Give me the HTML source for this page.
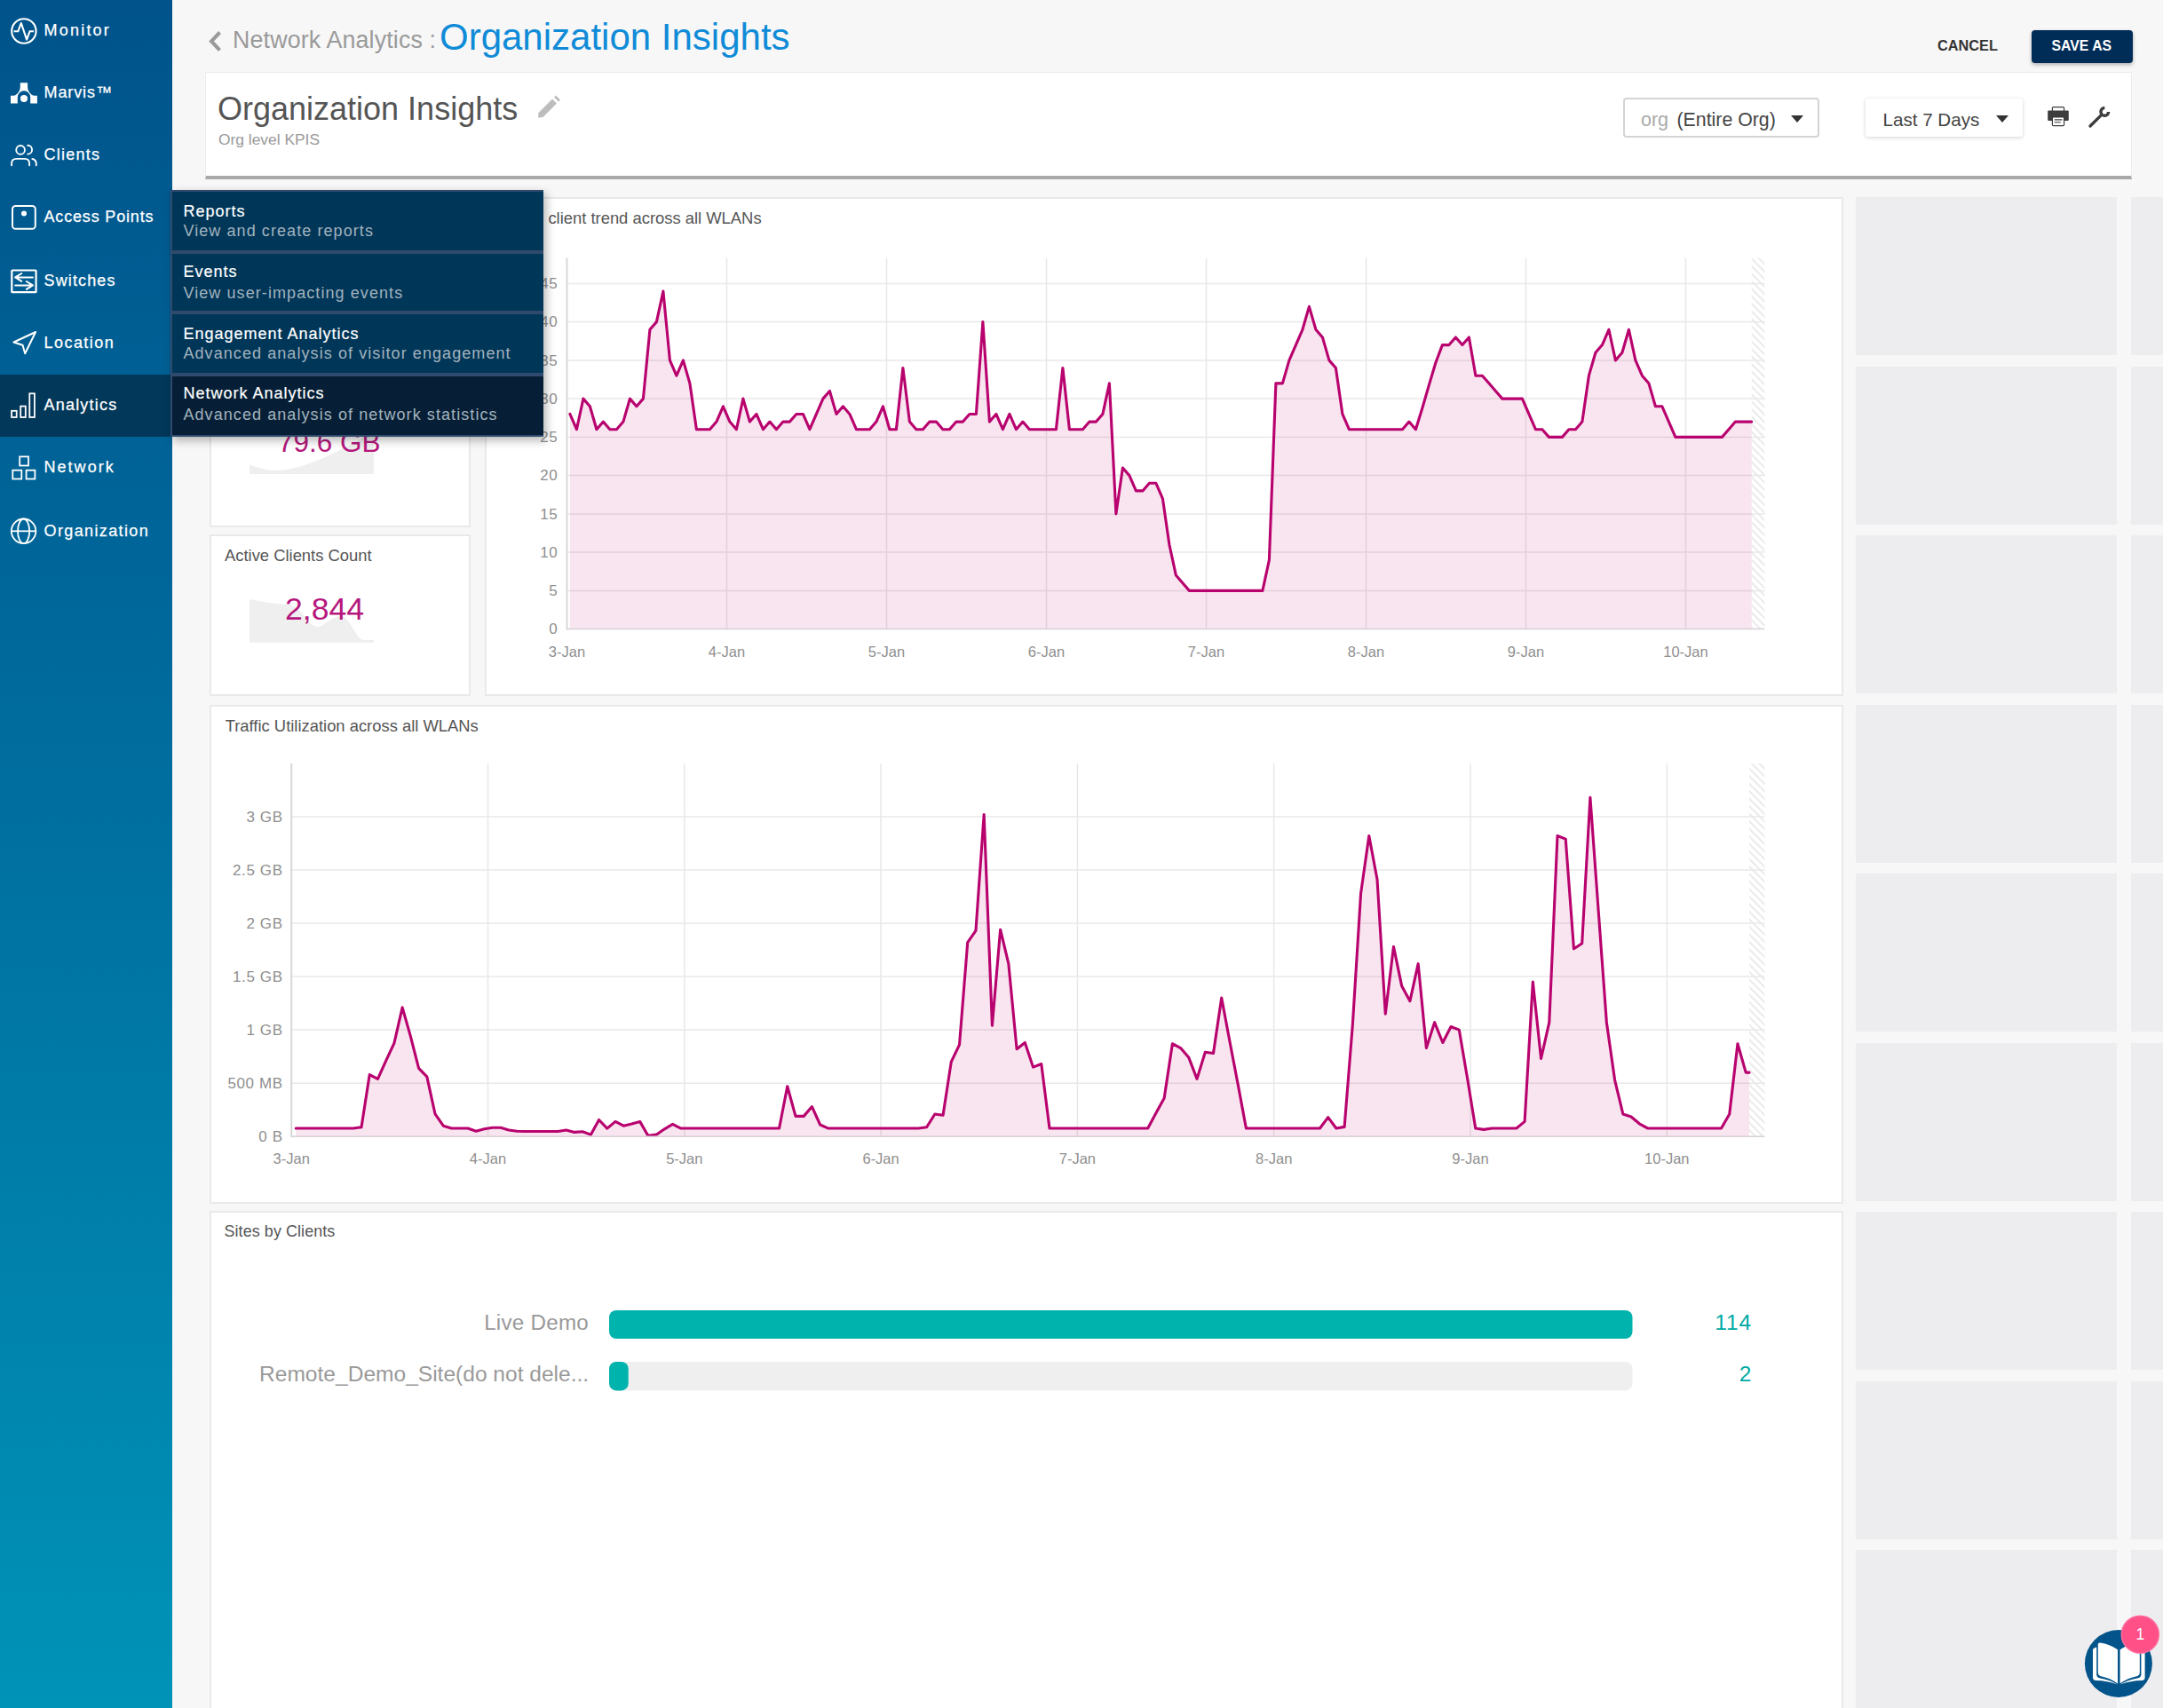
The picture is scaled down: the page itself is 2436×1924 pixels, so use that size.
<!DOCTYPE html>
<html><head><meta charset="utf-8"><title>Organization Insights</title>
<style>
html,body{margin:0;padding:0}
body{width:2436px;height:1924px;overflow:hidden;position:relative;background:#f7f7f7;font-family:"Liberation Sans", sans-serif;}
.abs{position:absolute}
#side{position:absolute;left:0;top:0;width:194px;height:1924px;background:linear-gradient(to bottom,#00538b 0%,#006a9c 40%,#0093b8 100%)}
.nav{position:absolute;left:49.5px;height:40px;line-height:40px;color:#fff;font-size:18px;letter-spacing:0.55px;white-space:nowrap;-webkit-text-stroke:0.25px #fff}
.card{position:absolute;background:#fff;border:2px solid #e8e9eb;box-sizing:border-box}
.blk{position:absolute;background:#ededef}
.ttl{position:absolute;font-size:18.4px;color:#555;white-space:nowrap;line-height:20px}
.menu{position:absolute;left:192px;top:214px;width:420px;height:278px;background:#2f4a6c;box-shadow:3px 4px 10px rgba(0,0,0,0.3)}
.mi{position:absolute;left:2px;width:418px;background:#003658}
.mi .t{position:absolute;left:12.5px;font-size:18px;color:#fff;letter-spacing:1.0px;-webkit-text-stroke:0.2px #fff;white-space:nowrap;line-height:20px}
.mi .s{position:absolute;left:12.4px;font-size:18px;color:#a3b3be;letter-spacing:1.08px;white-space:nowrap;line-height:20px}
</style></head><body>
<div id="side"></div>
<div class="abs" style="left:0;top:422px;width:193px;height:70px;background:#02385a"></div>
<svg class="abs" style="left:0;top:0" width="194" height="700" viewBox="0 0 194 700">
<circle cx="26.9" cy="35" r="13.7" stroke="#fff" fill="none" stroke-width="2.1"/>
<polyline points="15.6,35.3 20.3,35.3 23.8,26 30.1,44.6 33.5,35.3 38,35.3" stroke="#fff" fill="none" stroke-width="2.1" stroke-linejoin="round"/>
<path d="M22.8,93.3 H31.1 V98 C31.1,103 35.5,107.8 38.7,107.8 H41.9 V116.4 H34.2 V109.5 A7.2,7.2 0 0 0 19.8,109.5 V116.4 H12 V107.8 H15.2 C18.4,107.8 22.8,103 22.8,98 Z" fill="#fff"/>
<circle cx="27" cy="111" r="4" fill="#fff"/>
<circle cx="23.1" cy="168.9" r="4.85" stroke="#fff" fill="none" stroke-width="1.9"/>
<path d="M31.2,163.8 A4.7,4.7 0 0 1 31.2,173.6" stroke="#fff" fill="none" stroke-width="1.9" stroke-linecap="round"/>
<path d="M13.1,186.3 V184.2 C13.1,180.8 15.4,178.9 18.6,178.9 H27.6 C30.8,178.9 33.1,180.8 33.1,184.2 V186.3" stroke="#fff" fill="none" stroke-width="1.9" stroke-linecap="round"/>
<path d="M36.3,179 C39,179.6 40.8,181.8 40.8,184.6 V186.3" stroke="#fff" fill="none" stroke-width="1.9" stroke-linecap="round"/>
<rect x="14" y="232" width="25.8" height="25.8" rx="3.6" stroke="#fff" fill="none" stroke-width="2"/>
<circle cx="27" cy="240.5" r="3" fill="#fff"/>
<rect x="13.3" y="304.5" width="27.3" height="24.7" rx="0.8" stroke="#fff" fill="none" stroke-width="2.2"/>
<path d="M36.9,312.4 H17.2 M24.3,308 L17.2,312.4 L24.3,316.8" stroke="#fff" fill="none" stroke-width="2" stroke-linecap="round" stroke-linejoin="round"/>
<path d="M17.2,321.4 H36.9 M29.8,317 L36.9,321.4 L29.8,325.8" stroke="#fff" fill="none" stroke-width="2" stroke-linecap="round" stroke-linejoin="round"/>
<path d="M40.1,374 L15.4,385.5 L25.5,388.8 L28.2,398.2 Z" stroke="#fff" fill="none" stroke-width="2" stroke-linejoin="round"/>
<rect x="13.1" y="462.8" width="5.6" height="7.2" stroke="#fff" fill="none" stroke-width="1.8"/>
<rect x="23.2" y="457.6" width="5.6" height="12.4" stroke="#fff" fill="none" stroke-width="1.8"/>
<rect x="33.3" y="443.3" width="5.6" height="26.7" stroke="#fff" fill="none" stroke-width="1.8"/>
<rect x="22.2" y="514.4" width="9.8" height="10.1" stroke="#fff" fill="none" stroke-width="1.8"/>
<rect x="14.3" y="529.7" width="10" height="9.8" stroke="#fff" fill="none" stroke-width="1.8"/>
<rect x="29.6" y="529.7" width="9.8" height="9.8" stroke="#fff" fill="none" stroke-width="1.8"/>
<circle cx="26.6" cy="598.3" r="13.8" stroke="#fff" fill="none" stroke-width="1.8"/>
<ellipse cx="26.6" cy="598.3" rx="6.6" ry="13.8" stroke="#fff" fill="none" stroke-width="1.8"/>
<line x1="12.8" y1="598.3" x2="40.4" y2="598.3" stroke="#fff" stroke-width="1.8"/>
</svg>
<div class="nav" style="top:14px;letter-spacing:2.22px">Monitor</div><div class="nav" style="top:84px;letter-spacing:0.9px">Marvis™</div><div class="nav" style="top:154px;letter-spacing:1.23px">Clients</div><div class="nav" style="top:224px;letter-spacing:0.83px">Access Points</div><div class="nav" style="top:296px;letter-spacing:1.14px">Switches</div><div class="nav" style="top:366px;letter-spacing:1.46px">Location</div><div class="nav" style="top:436px;letter-spacing:1.2px">Analytics</div><div class="nav" style="top:506px;letter-spacing:2.03px">Network</div><div class="nav" style="top:578px;letter-spacing:1.38px">Organization</div>

<!-- header -->
<svg class="abs" style="left:230px;top:30px" width="30" height="32"><polyline points="17.5,6.5 8,16.5 17.5,26.5" fill="none" stroke="#9a9a9a" stroke-width="4"/></svg>
<div class="abs" style="left:262px;top:24.6px;font-size:26.8px;letter-spacing:0.15px;color:#9a9a9a;white-space:nowrap;line-height:40px">Network Analytics :</div>
<div class="abs" style="left:495px;top:14px;font-size:42px;color:#0f8bd8;white-space:nowrap;line-height:56px">Organization Insights</div>
<div class="abs" style="left:2182px;top:37.8px;font-size:16.3px;font-weight:bold;color:#333;white-space:nowrap;line-height:26px">CANCEL</div>
<div class="abs" style="left:2288px;top:34px;width:114px;height:37px;background:#002d58;border-radius:4px;box-shadow:0 2px 4px rgba(0,0,0,0.3)"></div>
<div class="abs" style="left:2310.5px;top:39px;font-size:15.8px;font-weight:bold;color:#fff;white-space:nowrap;line-height:26px">SAVE AS</div>

<div class="abs" style="left:231px;top:81px;width:2170px;height:121px;background:#fff;border:1px solid #ececec;border-bottom:4px solid #a9a9a9;box-sizing:border-box"></div>
<div class="abs" style="left:245px;top:100.5px;font-size:36px;color:#555;white-space:nowrap;line-height:44px">Organization Insights</div>
<svg class="abs" style="left:603px;top:106px" width="30" height="30" viewBox="0 0 30 30"><path d="M3,26.5 L3.5,21 L19,5.5 L24,10.5 L8.5,26 Z M21,3.5 L23,1.5 L28,6.5 L26,8.5 Z" fill="#bdbdbd"/></svg>
<div class="abs" style="left:246px;top:146px;font-size:17.4px;color:#9a9a9a;white-space:nowrap;line-height:22px">Org level KPIS</div>

<div class="abs" style="left:1828px;top:110px;width:221px;height:45px;border:2px solid #d4d4d4;border-radius:4px;box-sizing:border-box;background:#fff"></div>
<div class="abs" style="left:1848px;top:122px;font-size:21.5px;color:#aaa;white-space:nowrap;line-height:26px">org</div>
<div class="abs" style="left:1888.5px;top:122px;font-size:21.3px;color:#444;white-space:nowrap;line-height:26px">(Entire Org)</div>
<svg class="abs" style="left:2016px;top:129px" width="16" height="10"><polygon points="1,1 15,1 8,9" fill="#333"/></svg>
<div class="abs" style="left:2101px;top:111px;width:177px;height:43px;background:#fff;border-radius:3px;box-shadow:0 1px 4px rgba(0,0,0,0.18)"></div>
<div class="abs" style="left:2120.5px;top:121.5px;font-size:20.6px;color:#444;white-space:nowrap;line-height:26px">Last 7 Days</div>
<svg class="abs" style="left:2247px;top:129px" width="16" height="10"><polygon points="1,1 15,1 8,9" fill="#333"/></svg>
<svg class="abs" style="left:0;top:0" width="2436" height="160" viewBox="0 0 2436 160">
<rect x="2311.4" y="120.6" width="13.2" height="8" rx="1.2" fill="#fff" stroke="#3d3d3d" stroke-width="1.2"/>
<rect x="2306.2" y="124.4" width="23.6" height="11.6" rx="1.2" fill="#3d3d3d"/>
<rect x="2311.4" y="132" width="13.2" height="9.6" rx="1.2" fill="#fff" stroke="#3d3d3d" stroke-width="1.2"/>
<path d="M2313.6,134.9 H2322.6 M2313.6,137.7 H2320.8" stroke="#3d3d3d" stroke-width="1.1"/>
<line x1="2354" y1="142" x2="2366.5" y2="129.6" stroke="#3d3d3d" stroke-width="3.3" stroke-linecap="round"/>
<path d="M2374.6,125.9 A4.3,4.3 0 1 1 2370.3,121.6" fill="none" stroke="#3d3d3d" stroke-width="3.5"/>
</svg>

<!-- cards -->
<div class="card" style="left:236px;top:222px;width:294px;height:372px"></div>
<svg class="abs" style="left:0;top:0" width="540" height="800" viewBox="0 0 540 800">
<path d="M281,523.6 C292,527 300,530 310,530 C340,530 380,510 421,486 V534 H281 Z" fill="#efefef"/>
<path d="M281,675 C300,679 312,680 325,681 C340,683 348,706 357,706 C366,706 372,694 385,694 C395,696 400,720 410,721 H421 V723.7 H281 Z" fill="#efefef"/>
</svg>
<div class="abs" style="left:313px;top:475.5px;font-size:31.5px;color:#b5177d;white-space:nowrap;line-height:44px">79.6 GB</div>
<div class="card" style="left:236px;top:602px;width:294px;height:182px"></div>
<svg class="abs" style="left:0;top:0" width="540" height="800" viewBox="0 0 540 800">
<path d="M281,675 C300,679 312,680 325,681 C340,683 348,706 357,706 C366,706 372,694 385,694 C395,696 400,720 410,721 H421 V723.7 H281 Z" fill="#efefef"/>
</svg>
<div class="ttl" style="left:253px;top:616px">Active Clients Count</div>
<div class="abs" style="left:321px;top:664px;font-size:35.6px;color:#b5177d;white-space:nowrap;line-height:44px">2,844</div>

<div class="card" style="left:546px;top:222px;width:1530px;height:562px"></div>
<div class="ttl" style="left:617.4px;top:236px">client trend across all WLANs</div>

<div class="card" style="left:236px;top:794px;width:1840px;height:562px"></div>
<div class="ttl" style="left:253.7px;top:808px">Traffic Utilization across all WLANs</div>

<div class="card" style="left:236px;top:1364px;width:1840px;height:600px"></div>
<div class="ttl" style="left:252.5px;top:1377px;font-size:17.9px;letter-spacing:0.1px">Sites by Clients</div>

<svg class="abs" style="left:0;top:0" width="2436" height="1924" viewBox="0 0 2436 1924" font-family='"Liberation Sans", sans-serif'>
<defs><pattern id="hatch" patternUnits="userSpaceOnUse" width="6" height="6" patternTransform="rotate(-45)"><rect width="6" height="6" fill="#fff"/><rect width="1.6" height="6" fill="#e6e6e6"/></pattern></defs>
<rect x="1972.7" y="290.5" width="14.700000000000045" height="418.1" fill="url(#hatch)"/>
<line x1="818.5" y1="290.5" x2="818.5" y2="708.6" stroke="#e8e8e8" stroke-width="1.5"/>
<line x1="998.5" y1="290.5" x2="998.5" y2="708.6" stroke="#e8e8e8" stroke-width="1.5"/>
<line x1="1178.5" y1="290.5" x2="1178.5" y2="708.6" stroke="#e8e8e8" stroke-width="1.5"/>
<line x1="1358.5" y1="290.5" x2="1358.5" y2="708.6" stroke="#e8e8e8" stroke-width="1.5"/>
<line x1="1538.5" y1="290.5" x2="1538.5" y2="708.6" stroke="#e8e8e8" stroke-width="1.5"/>
<line x1="1718.5" y1="290.5" x2="1718.5" y2="708.6" stroke="#e8e8e8" stroke-width="1.5"/>
<line x1="1898.5" y1="290.5" x2="1898.5" y2="708.6" stroke="#e8e8e8" stroke-width="1.5"/>
<line x1="638.5" y1="665.4" x2="1987.4" y2="665.4" stroke="#e8e8e8" stroke-width="1.5"/>
<line x1="638.5" y1="622.1" x2="1987.4" y2="622.1" stroke="#e8e8e8" stroke-width="1.5"/>
<line x1="638.5" y1="578.9" x2="1987.4" y2="578.9" stroke="#e8e8e8" stroke-width="1.5"/>
<line x1="638.5" y1="535.6" x2="1987.4" y2="535.6" stroke="#e8e8e8" stroke-width="1.5"/>
<line x1="638.5" y1="492.4" x2="1987.4" y2="492.4" stroke="#e8e8e8" stroke-width="1.5"/>
<line x1="638.5" y1="449.1" x2="1987.4" y2="449.1" stroke="#e8e8e8" stroke-width="1.5"/>
<line x1="638.5" y1="405.9" x2="1987.4" y2="405.9" stroke="#e8e8e8" stroke-width="1.5"/>
<line x1="638.5" y1="362.6" x2="1987.4" y2="362.6" stroke="#e8e8e8" stroke-width="1.5"/>
<line x1="638.5" y1="319.4" x2="1987.4" y2="319.4" stroke="#e8e8e8" stroke-width="1.5"/>
<path d="M641.90,466.43 L649.40,483.73 L656.90,449.13 L664.40,457.78 L671.90,483.73 L679.40,475.08 L686.90,483.73 L694.40,483.73 L701.90,475.08 L709.40,449.13 L716.90,457.78 L724.40,449.13 L731.90,371.29 L739.40,362.64 L746.90,328.04 L754.40,405.89 L761.90,423.18 L769.40,405.89 L776.90,431.83 L784.40,483.73 L791.90,483.73 L799.40,483.73 L806.90,475.08 L814.40,457.78 L821.90,475.08 L829.40,483.73 L836.90,449.13 L844.40,475.08 L851.90,466.43 L859.40,483.73 L866.90,475.08 L874.40,483.73 L881.90,475.08 L889.40,475.08 L896.90,466.43 L904.40,466.43 L911.90,483.73 L919.40,466.43 L926.90,449.13 L934.40,440.48 L941.90,466.43 L949.40,457.78 L956.90,466.43 L964.40,483.73 L971.90,483.73 L979.40,483.73 L986.90,475.08 L994.40,457.78 L1001.90,483.73 L1009.40,483.73 L1016.90,414.53 L1024.40,475.08 L1031.90,483.73 L1039.40,483.73 L1046.90,475.08 L1054.40,475.08 L1061.90,483.73 L1069.40,483.73 L1076.90,475.08 L1084.40,475.08 L1091.90,466.43 L1099.40,466.43 L1106.90,362.64 L1114.40,475.08 L1121.90,466.43 L1129.40,483.73 L1136.90,466.43 L1144.40,483.73 L1151.90,475.08 L1159.40,483.73 L1166.90,483.73 L1174.40,483.73 L1181.90,483.73 L1189.40,483.73 L1196.90,414.53 L1204.40,483.73 L1211.90,483.73 L1219.40,483.73 L1226.90,475.08 L1234.40,475.08 L1241.90,466.43 L1249.40,431.83 L1256.90,578.87 L1264.40,526.97 L1271.90,535.62 L1279.40,552.92 L1286.90,552.92 L1294.40,544.27 L1301.90,544.27 L1309.40,561.57 L1316.90,613.46 L1324.40,648.06 L1331.90,656.71 L1339.40,665.36 L1346.90,665.36 L1354.40,665.36 L1361.90,665.36 L1369.40,665.36 L1376.90,665.36 L1384.40,665.36 L1391.90,665.36 L1399.40,665.36 L1406.90,665.36 L1414.40,665.36 L1421.90,665.36 L1429.40,630.76 L1436.90,431.83 L1444.40,431.83 L1451.90,405.89 L1459.40,388.59 L1466.90,371.29 L1474.40,345.34 L1481.90,371.29 L1489.40,379.94 L1496.90,405.89 L1504.40,414.53 L1511.90,466.43 L1519.40,483.73 L1526.90,483.73 L1534.40,483.73 L1541.90,483.73 L1549.40,483.73 L1556.90,483.73 L1564.40,483.73 L1571.90,483.73 L1579.40,483.73 L1586.90,475.08 L1594.40,483.73 L1601.90,459.51 L1609.40,433.56 L1616.90,408.48 L1624.40,388.59 L1631.90,388.59 L1639.40,379.94 L1646.90,388.59 L1654.40,379.94 L1661.90,423.18 L1669.40,423.18 L1676.90,431.83 L1684.40,440.48 L1691.90,449.13 L1699.40,449.13 L1706.90,449.13 L1714.40,449.13 L1721.90,466.43 L1729.40,483.73 L1736.90,483.73 L1744.40,492.38 L1751.90,492.38 L1759.40,492.38 L1766.90,483.73 L1774.40,483.73 L1781.90,475.08 L1789.40,423.18 L1796.90,397.24 L1804.40,388.59 L1811.90,371.29 L1819.40,405.89 L1826.90,397.24 L1834.40,371.29 L1841.90,405.89 L1849.40,423.18 L1856.90,431.83 L1864.40,457.78 L1871.90,457.78 L1879.40,475.08 L1886.90,492.38 L1894.40,492.38 L1901.90,492.38 L1909.40,492.38 L1916.90,492.38 L1924.40,492.38 L1931.90,492.38 L1939.40,492.38 L1946.90,483.73 L1954.40,475.08 L1961.90,475.08 L1969.40,475.08 L1972.70,475.08 L1972.7,708.6 L641.9,708.6 Z" fill="#b8026e" fill-opacity="0.1"/>
<path d="M641.90,466.43 L649.40,483.73 L656.90,449.13 L664.40,457.78 L671.90,483.73 L679.40,475.08 L686.90,483.73 L694.40,483.73 L701.90,475.08 L709.40,449.13 L716.90,457.78 L724.40,449.13 L731.90,371.29 L739.40,362.64 L746.90,328.04 L754.40,405.89 L761.90,423.18 L769.40,405.89 L776.90,431.83 L784.40,483.73 L791.90,483.73 L799.40,483.73 L806.90,475.08 L814.40,457.78 L821.90,475.08 L829.40,483.73 L836.90,449.13 L844.40,475.08 L851.90,466.43 L859.40,483.73 L866.90,475.08 L874.40,483.73 L881.90,475.08 L889.40,475.08 L896.90,466.43 L904.40,466.43 L911.90,483.73 L919.40,466.43 L926.90,449.13 L934.40,440.48 L941.90,466.43 L949.40,457.78 L956.90,466.43 L964.40,483.73 L971.90,483.73 L979.40,483.73 L986.90,475.08 L994.40,457.78 L1001.90,483.73 L1009.40,483.73 L1016.90,414.53 L1024.40,475.08 L1031.90,483.73 L1039.40,483.73 L1046.90,475.08 L1054.40,475.08 L1061.90,483.73 L1069.40,483.73 L1076.90,475.08 L1084.40,475.08 L1091.90,466.43 L1099.40,466.43 L1106.90,362.64 L1114.40,475.08 L1121.90,466.43 L1129.40,483.73 L1136.90,466.43 L1144.40,483.73 L1151.90,475.08 L1159.40,483.73 L1166.90,483.73 L1174.40,483.73 L1181.90,483.73 L1189.40,483.73 L1196.90,414.53 L1204.40,483.73 L1211.90,483.73 L1219.40,483.73 L1226.90,475.08 L1234.40,475.08 L1241.90,466.43 L1249.40,431.83 L1256.90,578.87 L1264.40,526.97 L1271.90,535.62 L1279.40,552.92 L1286.90,552.92 L1294.40,544.27 L1301.90,544.27 L1309.40,561.57 L1316.90,613.46 L1324.40,648.06 L1331.90,656.71 L1339.40,665.36 L1346.90,665.36 L1354.40,665.36 L1361.90,665.36 L1369.40,665.36 L1376.90,665.36 L1384.40,665.36 L1391.90,665.36 L1399.40,665.36 L1406.90,665.36 L1414.40,665.36 L1421.90,665.36 L1429.40,630.76 L1436.90,431.83 L1444.40,431.83 L1451.90,405.89 L1459.40,388.59 L1466.90,371.29 L1474.40,345.34 L1481.90,371.29 L1489.40,379.94 L1496.90,405.89 L1504.40,414.53 L1511.90,466.43 L1519.40,483.73 L1526.90,483.73 L1534.40,483.73 L1541.90,483.73 L1549.40,483.73 L1556.90,483.73 L1564.40,483.73 L1571.90,483.73 L1579.40,483.73 L1586.90,475.08 L1594.40,483.73 L1601.90,459.51 L1609.40,433.56 L1616.90,408.48 L1624.40,388.59 L1631.90,388.59 L1639.40,379.94 L1646.90,388.59 L1654.40,379.94 L1661.90,423.18 L1669.40,423.18 L1676.90,431.83 L1684.40,440.48 L1691.90,449.13 L1699.40,449.13 L1706.90,449.13 L1714.40,449.13 L1721.90,466.43 L1729.40,483.73 L1736.90,483.73 L1744.40,492.38 L1751.90,492.38 L1759.40,492.38 L1766.90,483.73 L1774.40,483.73 L1781.90,475.08 L1789.40,423.18 L1796.90,397.24 L1804.40,388.59 L1811.90,371.29 L1819.40,405.89 L1826.90,397.24 L1834.40,371.29 L1841.90,405.89 L1849.40,423.18 L1856.90,431.83 L1864.40,457.78 L1871.90,457.78 L1879.40,475.08 L1886.90,492.38 L1894.40,492.38 L1901.90,492.38 L1909.40,492.38 L1916.90,492.38 L1924.40,492.38 L1931.90,492.38 L1939.40,492.38 L1946.90,483.73 L1954.40,475.08 L1961.90,475.08 L1969.40,475.08 L1972.70,475.08" fill="none" stroke="#b8026e" stroke-width="3.1" stroke-linejoin="round" stroke-linecap="round"/>
<line x1="638.5" y1="290.5" x2="638.5" y2="709.6" stroke="#d8d8d8" stroke-width="2"/>
<line x1="638.5" y1="708.6" x2="1987.4" y2="708.6" stroke="#d8d0d8" stroke-width="1.5"/>
<text x="628.3" y="714.4" text-anchor="end" font-size="17" letter-spacing="0.6" fill="#8f8f8f">0</text>
<text x="628.3" y="671.2" text-anchor="end" font-size="17" letter-spacing="0.6" fill="#8f8f8f">5</text>
<text x="628.3" y="627.9" text-anchor="end" font-size="17" letter-spacing="0.6" fill="#8f8f8f">10</text>
<text x="628.3" y="584.7" text-anchor="end" font-size="17" letter-spacing="0.6" fill="#8f8f8f">15</text>
<text x="628.3" y="541.4" text-anchor="end" font-size="17" letter-spacing="0.6" fill="#8f8f8f">20</text>
<text x="628.3" y="498.2" text-anchor="end" font-size="17" letter-spacing="0.6" fill="#8f8f8f">25</text>
<text x="628.3" y="454.9" text-anchor="end" font-size="17" letter-spacing="0.6" fill="#8f8f8f">30</text>
<text x="628.3" y="411.7" text-anchor="end" font-size="17" letter-spacing="0.6" fill="#8f8f8f">35</text>
<text x="628.3" y="368.4" text-anchor="end" font-size="17" letter-spacing="0.6" fill="#8f8f8f">40</text>
<text x="628.3" y="325.2" text-anchor="end" font-size="17" letter-spacing="0.6" fill="#8f8f8f">45</text>
<text x="638.5" y="740" text-anchor="middle" font-size="16.5" fill="#8f8f8f">3-Jan</text>
<text x="818.5" y="740" text-anchor="middle" font-size="16.5" fill="#8f8f8f">4-Jan</text>
<text x="998.5" y="740" text-anchor="middle" font-size="16.5" fill="#8f8f8f">5-Jan</text>
<text x="1178.5" y="740" text-anchor="middle" font-size="16.5" fill="#8f8f8f">6-Jan</text>
<text x="1358.5" y="740" text-anchor="middle" font-size="16.5" fill="#8f8f8f">7-Jan</text>
<text x="1538.5" y="740" text-anchor="middle" font-size="16.5" fill="#8f8f8f">8-Jan</text>
<text x="1718.5" y="740" text-anchor="middle" font-size="16.5" fill="#8f8f8f">9-Jan</text>
<text x="1898.5" y="740" text-anchor="middle" font-size="16.5" fill="#8f8f8f">10-Jan</text>
<rect x="1970" y="860" width="17.5" height="420.20000000000005" fill="url(#hatch)"/>
<line x1="549.5" y1="860" x2="549.5" y2="1280.2" stroke="#e8e8e8" stroke-width="1.5"/>
<line x1="770.8" y1="860" x2="770.8" y2="1280.2" stroke="#e8e8e8" stroke-width="1.5"/>
<line x1="992.1000000000001" y1="860" x2="992.1000000000001" y2="1280.2" stroke="#e8e8e8" stroke-width="1.5"/>
<line x1="1213.4" y1="860" x2="1213.4" y2="1280.2" stroke="#e8e8e8" stroke-width="1.5"/>
<line x1="1434.7" y1="860" x2="1434.7" y2="1280.2" stroke="#e8e8e8" stroke-width="1.5"/>
<line x1="1656.0000000000002" y1="860" x2="1656.0000000000002" y2="1280.2" stroke="#e8e8e8" stroke-width="1.5"/>
<line x1="1877.3000000000002" y1="860" x2="1877.3000000000002" y2="1280.2" stroke="#e8e8e8" stroke-width="1.5"/>
<line x1="328.2" y1="1220.2" x2="1987.5" y2="1220.2" stroke="#e8e8e8" stroke-width="1.5"/>
<line x1="328.2" y1="1160.1" x2="1987.5" y2="1160.1" stroke="#e8e8e8" stroke-width="1.5"/>
<line x1="328.2" y1="1100.1" x2="1987.5" y2="1100.1" stroke="#e8e8e8" stroke-width="1.5"/>
<line x1="328.2" y1="1040.0" x2="1987.5" y2="1040.0" stroke="#e8e8e8" stroke-width="1.5"/>
<line x1="328.2" y1="980.0" x2="1987.5" y2="980.0" stroke="#e8e8e8" stroke-width="1.5"/>
<line x1="328.2" y1="919.9" x2="1987.5" y2="919.9" stroke="#e8e8e8" stroke-width="1.5"/>
<path d="M333.20,1271.07 L342.43,1271.07 L351.65,1271.07 L360.88,1271.07 L370.10,1271.07 L379.33,1271.07 L388.56,1271.07 L397.78,1271.07 L407.01,1269.75 L416.23,1210.54 L425.46,1215.35 L434.69,1194.93 L443.91,1175.11 L453.14,1134.88 L462.36,1167.31 L471.59,1203.34 L480.82,1212.94 L490.04,1254.98 L499.27,1268.19 L508.49,1271.07 L517.72,1271.07 L526.95,1271.07 L536.17,1274.19 L545.40,1271.79 L554.62,1270.23 L563.85,1270.23 L573.08,1272.99 L582.30,1274.19 L591.53,1274.44 L600.75,1274.44 L609.98,1274.44 L619.21,1274.44 L628.43,1274.44 L637.66,1272.99 L646.88,1275.40 L656.11,1274.80 L665.34,1278.16 L674.56,1261.46 L683.79,1271.07 L693.01,1263.39 L702.24,1268.19 L711.47,1266.03 L720.69,1263.39 L729.92,1279.36 L739.14,1278.16 L748.37,1271.79 L757.60,1266.39 L766.82,1271.07 L776.05,1271.07 L785.27,1271.07 L794.50,1271.07 L803.73,1271.07 L812.95,1271.07 L822.18,1271.07 L831.40,1271.07 L840.63,1271.07 L849.86,1271.07 L859.08,1271.07 L868.31,1271.07 L877.53,1271.07 L886.76,1223.75 L895.99,1257.38 L905.21,1257.38 L914.44,1246.57 L923.66,1266.99 L932.89,1271.07 L942.12,1271.07 L951.34,1271.07 L960.57,1271.07 L969.79,1271.07 L979.02,1271.07 L988.25,1271.07 L997.47,1271.07 L1006.70,1271.07 L1015.92,1271.07 L1025.15,1271.07 L1034.38,1271.07 L1043.60,1269.75 L1052.83,1254.98 L1062.05,1256.18 L1071.28,1196.13 L1080.51,1176.91 L1089.73,1061.62 L1098.96,1048.41 L1108.18,917.50 L1117.41,1155.30 L1126.64,1047.21 L1135.86,1085.64 L1145.09,1181.72 L1154.31,1174.51 L1163.54,1202.13 L1172.77,1198.53 L1181.99,1270.95 L1191.22,1270.95 L1200.44,1270.95 L1209.67,1270.95 L1218.90,1270.95 L1228.12,1270.95 L1237.35,1270.95 L1246.57,1270.95 L1255.80,1270.95 L1265.03,1270.95 L1274.25,1270.95 L1283.48,1270.95 L1292.70,1270.95 L1301.93,1253.78 L1311.16,1236.96 L1320.38,1175.71 L1329.61,1180.52 L1338.83,1191.33 L1348.06,1215.35 L1357.29,1185.32 L1366.51,1186.52 L1375.74,1124.07 L1384.96,1173.31 L1394.19,1221.35 L1403.42,1270.95 L1412.64,1270.95 L1421.87,1270.95 L1431.09,1270.95 L1440.32,1270.95 L1449.55,1270.95 L1458.77,1270.95 L1468.00,1270.95 L1477.22,1270.95 L1486.45,1270.95 L1495.68,1258.58 L1504.90,1270.95 L1514.13,1269.39 L1523.35,1154.10 L1532.58,1006.37 L1541.81,941.52 L1551.03,990.76 L1560.26,1142.09 L1569.48,1066.42 L1578.71,1110.86 L1587.94,1127.67 L1597.16,1085.64 L1606.39,1180.52 L1615.61,1151.69 L1624.84,1174.51 L1634.07,1156.50 L1643.29,1160.10 L1652.52,1214.14 L1661.74,1270.95 L1670.97,1272.39 L1680.20,1270.95 L1689.42,1270.95 L1698.65,1270.95 L1707.87,1270.95 L1717.10,1263.39 L1726.33,1106.06 L1735.55,1192.53 L1744.78,1151.69 L1754.00,941.52 L1763.23,945.12 L1772.46,1068.82 L1781.68,1062.82 L1790.91,898.28 L1800.13,1025.59 L1809.36,1151.69 L1818.59,1216.55 L1827.81,1254.98 L1837.04,1257.98 L1846.26,1265.79 L1855.49,1270.95 L1864.72,1270.95 L1873.94,1270.95 L1883.17,1270.95 L1892.39,1270.95 L1901.62,1270.95 L1910.85,1270.95 L1920.07,1270.95 L1929.30,1270.95 L1938.52,1270.95 L1947.75,1254.98 L1956.98,1175.71 L1966.20,1208.14 L1970.00,1208.14 L1970.0,1280.2 L333.2,1280.2 Z" fill="#b8026e" fill-opacity="0.1"/>
<path d="M333.20,1271.07 L342.43,1271.07 L351.65,1271.07 L360.88,1271.07 L370.10,1271.07 L379.33,1271.07 L388.56,1271.07 L397.78,1271.07 L407.01,1269.75 L416.23,1210.54 L425.46,1215.35 L434.69,1194.93 L443.91,1175.11 L453.14,1134.88 L462.36,1167.31 L471.59,1203.34 L480.82,1212.94 L490.04,1254.98 L499.27,1268.19 L508.49,1271.07 L517.72,1271.07 L526.95,1271.07 L536.17,1274.19 L545.40,1271.79 L554.62,1270.23 L563.85,1270.23 L573.08,1272.99 L582.30,1274.19 L591.53,1274.44 L600.75,1274.44 L609.98,1274.44 L619.21,1274.44 L628.43,1274.44 L637.66,1272.99 L646.88,1275.40 L656.11,1274.80 L665.34,1278.16 L674.56,1261.46 L683.79,1271.07 L693.01,1263.39 L702.24,1268.19 L711.47,1266.03 L720.69,1263.39 L729.92,1279.36 L739.14,1278.16 L748.37,1271.79 L757.60,1266.39 L766.82,1271.07 L776.05,1271.07 L785.27,1271.07 L794.50,1271.07 L803.73,1271.07 L812.95,1271.07 L822.18,1271.07 L831.40,1271.07 L840.63,1271.07 L849.86,1271.07 L859.08,1271.07 L868.31,1271.07 L877.53,1271.07 L886.76,1223.75 L895.99,1257.38 L905.21,1257.38 L914.44,1246.57 L923.66,1266.99 L932.89,1271.07 L942.12,1271.07 L951.34,1271.07 L960.57,1271.07 L969.79,1271.07 L979.02,1271.07 L988.25,1271.07 L997.47,1271.07 L1006.70,1271.07 L1015.92,1271.07 L1025.15,1271.07 L1034.38,1271.07 L1043.60,1269.75 L1052.83,1254.98 L1062.05,1256.18 L1071.28,1196.13 L1080.51,1176.91 L1089.73,1061.62 L1098.96,1048.41 L1108.18,917.50 L1117.41,1155.30 L1126.64,1047.21 L1135.86,1085.64 L1145.09,1181.72 L1154.31,1174.51 L1163.54,1202.13 L1172.77,1198.53 L1181.99,1270.95 L1191.22,1270.95 L1200.44,1270.95 L1209.67,1270.95 L1218.90,1270.95 L1228.12,1270.95 L1237.35,1270.95 L1246.57,1270.95 L1255.80,1270.95 L1265.03,1270.95 L1274.25,1270.95 L1283.48,1270.95 L1292.70,1270.95 L1301.93,1253.78 L1311.16,1236.96 L1320.38,1175.71 L1329.61,1180.52 L1338.83,1191.33 L1348.06,1215.35 L1357.29,1185.32 L1366.51,1186.52 L1375.74,1124.07 L1384.96,1173.31 L1394.19,1221.35 L1403.42,1270.95 L1412.64,1270.95 L1421.87,1270.95 L1431.09,1270.95 L1440.32,1270.95 L1449.55,1270.95 L1458.77,1270.95 L1468.00,1270.95 L1477.22,1270.95 L1486.45,1270.95 L1495.68,1258.58 L1504.90,1270.95 L1514.13,1269.39 L1523.35,1154.10 L1532.58,1006.37 L1541.81,941.52 L1551.03,990.76 L1560.26,1142.09 L1569.48,1066.42 L1578.71,1110.86 L1587.94,1127.67 L1597.16,1085.64 L1606.39,1180.52 L1615.61,1151.69 L1624.84,1174.51 L1634.07,1156.50 L1643.29,1160.10 L1652.52,1214.14 L1661.74,1270.95 L1670.97,1272.39 L1680.20,1270.95 L1689.42,1270.95 L1698.65,1270.95 L1707.87,1270.95 L1717.10,1263.39 L1726.33,1106.06 L1735.55,1192.53 L1744.78,1151.69 L1754.00,941.52 L1763.23,945.12 L1772.46,1068.82 L1781.68,1062.82 L1790.91,898.28 L1800.13,1025.59 L1809.36,1151.69 L1818.59,1216.55 L1827.81,1254.98 L1837.04,1257.98 L1846.26,1265.79 L1855.49,1270.95 L1864.72,1270.95 L1873.94,1270.95 L1883.17,1270.95 L1892.39,1270.95 L1901.62,1270.95 L1910.85,1270.95 L1920.07,1270.95 L1929.30,1270.95 L1938.52,1270.95 L1947.75,1254.98 L1956.98,1175.71 L1966.20,1208.14 L1970.00,1208.14" fill="none" stroke="#b8026e" stroke-width="3.1" stroke-linejoin="round" stroke-linecap="round"/>
<line x1="328.2" y1="860" x2="328.2" y2="1281.2" stroke="#d8d8d8" stroke-width="2"/>
<line x1="328.2" y1="1280.2" x2="1987.5" y2="1280.2" stroke="#d8d0d8" stroke-width="1.5"/>
<text x="318.6" y="1286.0" text-anchor="end" font-size="17" letter-spacing="0.6" fill="#8f8f8f">0 B</text>
<text x="318.6" y="1226.0" text-anchor="end" font-size="17" letter-spacing="0.6" fill="#8f8f8f">500 MB</text>
<text x="318.6" y="1165.9" text-anchor="end" font-size="17" letter-spacing="0.6" fill="#8f8f8f">1 GB</text>
<text x="318.6" y="1105.9" text-anchor="end" font-size="17" letter-spacing="0.6" fill="#8f8f8f">1.5 GB</text>
<text x="318.6" y="1045.8" text-anchor="end" font-size="17" letter-spacing="0.6" fill="#8f8f8f">2 GB</text>
<text x="318.6" y="985.8" text-anchor="end" font-size="17" letter-spacing="0.6" fill="#8f8f8f">2.5 GB</text>
<text x="318.6" y="925.7" text-anchor="end" font-size="17" letter-spacing="0.6" fill="#8f8f8f">3 GB</text>
<text x="328.2" y="1311.4" text-anchor="middle" font-size="16.5" fill="#8f8f8f">3-Jan</text>
<text x="549.5" y="1311.4" text-anchor="middle" font-size="16.5" fill="#8f8f8f">4-Jan</text>
<text x="770.8" y="1311.4" text-anchor="middle" font-size="16.5" fill="#8f8f8f">5-Jan</text>
<text x="992.1000000000001" y="1311.4" text-anchor="middle" font-size="16.5" fill="#8f8f8f">6-Jan</text>
<text x="1213.4" y="1311.4" text-anchor="middle" font-size="16.5" fill="#8f8f8f">7-Jan</text>
<text x="1434.7" y="1311.4" text-anchor="middle" font-size="16.5" fill="#8f8f8f">8-Jan</text>
<text x="1656.0000000000002" y="1311.4" text-anchor="middle" font-size="16.5" fill="#8f8f8f">9-Jan</text>
<text x="1877.3000000000002" y="1311.4" text-anchor="middle" font-size="16.5" fill="#8f8f8f">10-Jan</text>
<rect x="686" y="1476" width="1152.5" height="32" rx="8" fill="#00b3ad"/>
<rect x="686" y="1534" width="1152.5" height="32.4" rx="8" fill="#efefef"/>
<rect x="686" y="1534" width="21.7" height="32.4" rx="8" fill="#00b3ad"/>
<text x="663" y="1498" text-anchor="end" font-size="24.2" letter-spacing="0.25" fill="#999">Live Demo</text>
<text x="663.2" y="1556" text-anchor="end" font-size="24.55" fill="#999">Remote_Demo_Site(do not dele...</text>
<text x="1973.2" y="1498" text-anchor="end" font-size="24.5" letter-spacing="1" fill="#00aaa5">114</text>
<text x="1972.4" y="1556" text-anchor="end" font-size="24.5" fill="#00aaa5">2</text>
</svg>

<div class="blk" style="left:2090px;top:222.0px;width:294px;height:178px"></div><div class="blk" style="left:2400px;top:222.0px;width:60px;height:178px"></div><div class="blk" style="left:2090px;top:412.5px;width:294px;height:178px"></div><div class="blk" style="left:2400px;top:412.5px;width:60px;height:178px"></div><div class="blk" style="left:2090px;top:603.0px;width:294px;height:178px"></div><div class="blk" style="left:2400px;top:603.0px;width:60px;height:178px"></div><div class="blk" style="left:2090px;top:793.5px;width:294px;height:178px"></div><div class="blk" style="left:2400px;top:793.5px;width:60px;height:178px"></div><div class="blk" style="left:2090px;top:984.0px;width:294px;height:178px"></div><div class="blk" style="left:2400px;top:984.0px;width:60px;height:178px"></div><div class="blk" style="left:2090px;top:1174.5px;width:294px;height:178px"></div><div class="blk" style="left:2400px;top:1174.5px;width:60px;height:178px"></div><div class="blk" style="left:2090px;top:1365.0px;width:294px;height:178px"></div><div class="blk" style="left:2400px;top:1365.0px;width:60px;height:178px"></div><div class="blk" style="left:2090px;top:1555.5px;width:294px;height:178px"></div><div class="blk" style="left:2400px;top:1555.5px;width:60px;height:178px"></div><div class="blk" style="left:2090px;top:1746.0px;width:294px;height:178px"></div><div class="blk" style="left:2400px;top:1746.0px;width:60px;height:178px"></div>

<!-- help button -->
<svg class="abs" style="left:2330px;top:1800px" width="106" height="124" viewBox="2330 1800 106 124">
<circle cx="2385.9" cy="1874" r="38" fill="#03548a"/>
<path d="M2357,1857.8 Q2359,1856.2 2361.2,1855.6 V1886.5 Q2361.5,1889.8 2365.5,1890.6 Q2377,1892.6 2384.6,1897.5 Q2373,1893.2 2360.5,1893 Q2357,1892.8 2357,1889.5 Z" fill="#fff"/><path d="M2362.8,1852.2 Q2363,1850.2 2365.3,1850.5 Q2376,1852 2385,1858.2 V1896.6 Q2376,1890.3 2367.2,1888.6 Q2362.8,1887.6 2362.8,1884 Z" fill="#fff"/>
<path d="M 2415.60 1857.80 Q 2413.60 1856.20 2411.40 1855.60 V 1886.50 Q 2411.10 1889.80 2407.10 1890.60 Q 2395.60 1892.60 2388.00 1897.50 Q 2399.60 1893.20 2412.10 1893.00 Q 2415.60 1892.80 2415.60 1889.50 Z" fill="#fff"/><path d="M 2409.80 1852.20 Q 2409.60 1850.20 2407.30 1850.50 Q 2396.60 1852.00 2387.60 1858.20 V 1896.60 Q 2396.60 1890.30 2405.40 1888.60 Q 2409.80 1887.60 2409.80 1884.00 Z" fill="#fff"/>
<circle cx="2410.3" cy="1841.2" r="21" fill="#ff5088" stroke="#ff6d9c" stroke-width="1.5"/>
<text x="2410.3" y="1846.6" text-anchor="middle" font-size="17.5" fill="#fff" font-family='"Liberation Sans", sans-serif'>1</text>
</svg>

<!-- dropdown menu -->
<div class="menu">
<div class="mi" style="top:2px;height:66px;background:#003658"><div class="t" style="top:12px">Reports</div><div class="s" style="top:34px">View and create reports</div></div>
<div class="mi" style="top:72px;height:64px;background:#003658"><div class="t" style="top:10px">Events</div><div class="s" style="top:34px">View user-impacting events</div></div>
<div class="mi" style="top:140px;height:65.5px;background:#003658"><div class="t" style="top:11.5px">Engagement Analytics</div><div class="s" style="top:33.7px">Advanced analysis of visitor engagement</div></div>
<div class="mi" style="top:209.5px;height:66.8px;background:#061f36"><div class="t" style="top:9.8px">Network Analytics</div><div class="s" style="top:33.8px">Advanced analysis of network statistics</div></div>
</div>
</body></html>
